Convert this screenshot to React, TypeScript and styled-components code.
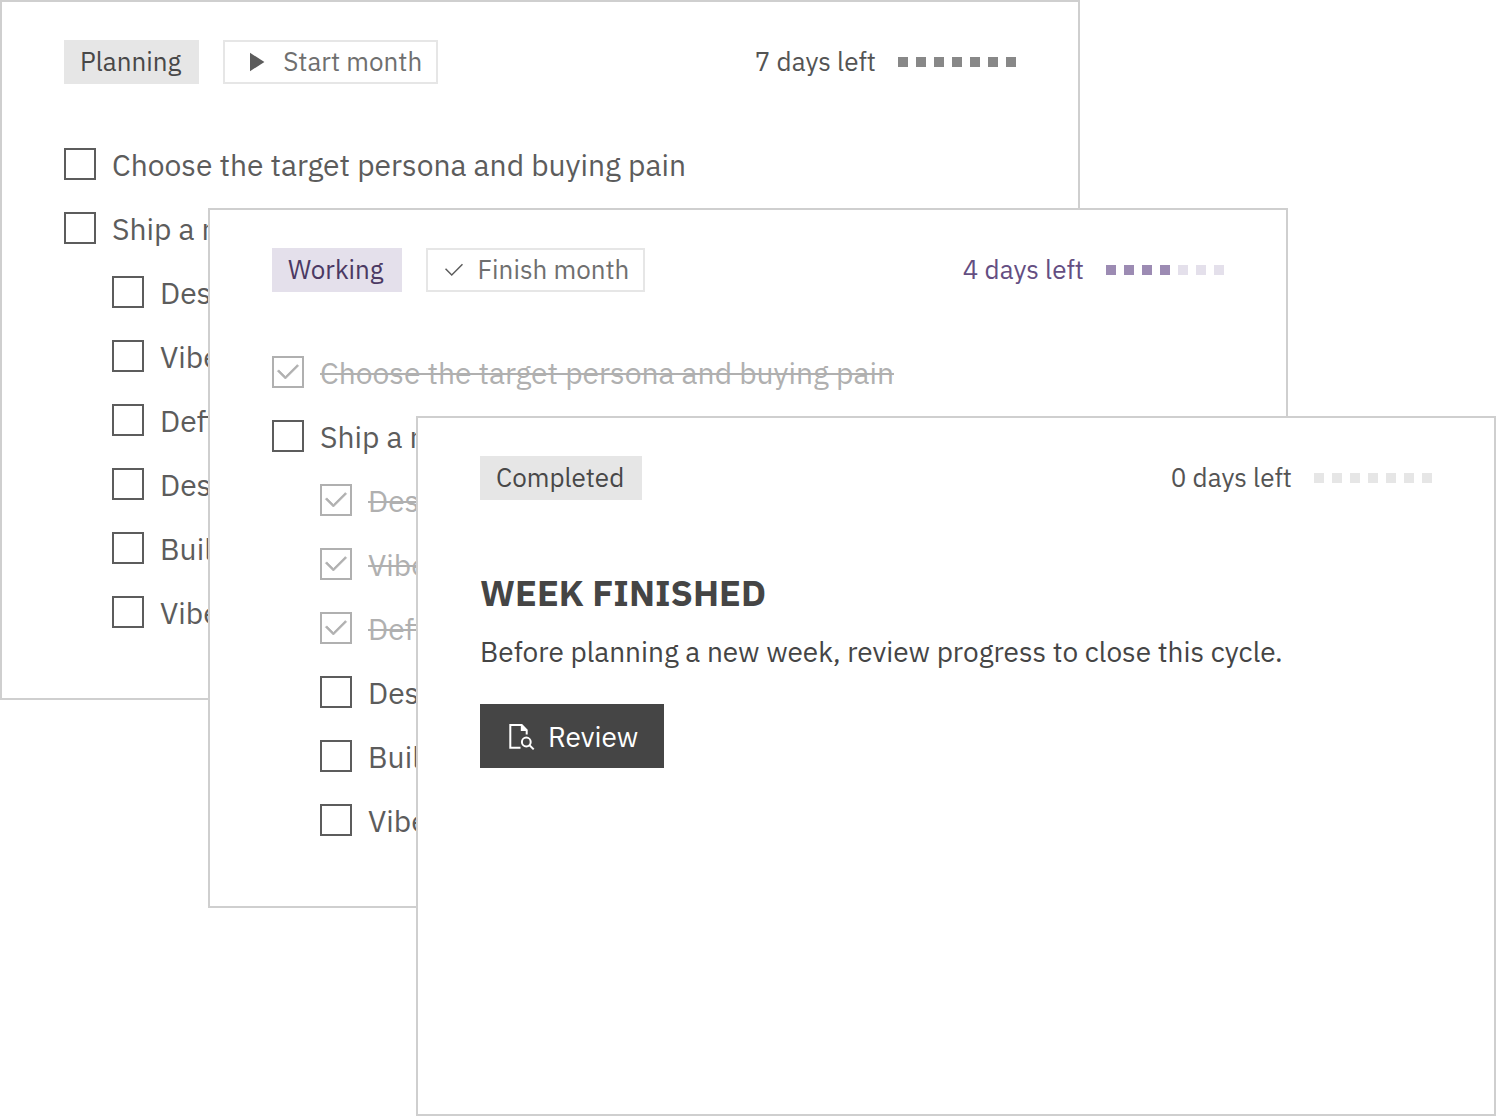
import React, { useId } from 'react';
import styled, { createGlobalStyle } from 'styled-components';

const GlobalStyle = createGlobalStyle`
  *, *::before, *::after { box-sizing: border-box; }
  body {
    margin: 0;
    background: #ffffff;
    color: #5c5c5c;
    font-family: 'IBM Plex Sans', 'Noto Sans', sans-serif;
    font-size: 26px;
    line-height: 34px;
  }
  button { font: inherit; cursor: pointer; }
`;

type Tone = 'neutral' | 'accent';

const textWeight = `'IBM Plex Sans Text', 'IBM Plex Sans', 'Noto Sans', sans-serif`;

const Stack = styled.main`
  display: grid;
  grid-template-columns: 208px 208px minmax(0, 1fr) 208px 208px;
  grid-template-rows: 208px 208px auto 208px 208px;
`;

const Card = styled.section<{ $step: number }>`
  grid-column: ${({ $step }) => `${$step} / span 3`};
  grid-row: ${({ $step }) => `${$step} / span 3`};
  min-height: 700px;
  padding: 38px 62px;
  background: #ffffff;
  border: 2px solid #cfcfcf;
`;

const Header = styled.header`
  display: flex;
  align-items: center;
  gap: 24px;
  height: 44px;
  margin-bottom: 64px;
`;

const HeaderText = styled.span`
  padding-bottom: 2px;
`;

const Badge = styled.span<{ $tone: Tone }>`
  padding: 4px 18px 6px 16px;
  font-family: ${textWeight};
  color: ${({ $tone }) => ($tone === 'accent' ? '#4b3963' : '#484848')};
  background: ${({ $tone }) => ($tone === 'accent' ? '#e4e0eb' : '#e6e6e6')};
`;

const OutlineButton = styled.button`
  display: flex;
  align-items: center;
  gap: 12px;
  height: 44px;
  padding: 0 14px;
  color: #6f6f6f;
  background: #ffffff;
  border: 2px solid #e6e6e6;
`;

const Remaining = styled.div<{ $tone: Tone }>`
  display: flex;
  align-items: center;
  gap: 22px;
  margin-left: auto;
  font-family: ${textWeight};
  white-space: nowrap;
  color: ${({ $tone }) => ($tone === 'accent' ? '#644e82' : '#545454')};
`;

const Dots = styled.div`
  display: flex;
  gap: 8px;
`;

const Dot = styled.span<{ $tone: Tone; $on: boolean }>`
  width: 10px;
  height: 10px;
  background: ${({ $tone, $on }) =>
    $tone === 'accent' ? ($on ? '#9c8bb3' : '#e4e0eb') : $on ? '#888888' : '#e6e6e6'};
`;

const TaskList = styled.ul`
  display: grid;
  gap: 32px;
  margin: 0;
  padding: 0;
  list-style: none;
`;

const TaskRow = styled.li<{ $nested?: boolean }>`
  display: flex;
  align-items: center;
  gap: 16px;
  height: 32px;
  padding-left: ${({ $nested }) => ($nested ? 48 : 0)}px;
`;

const CheckCell = styled.span`
  display: grid;
  flex: none;
  width: 32px;
  height: 32px;

  > * { grid-area: 1 / 1; }
  > svg { place-self: center; pointer-events: none; }
`;

const Check = styled.input`
  appearance: none;
  width: 32px;
  height: 32px;
  margin: 0;
  border: 2px solid #5c5c5c;
  background: #ffffff;
  &:checked { border-color: #b0b0b0; }
`;

const TaskLabel = styled.label<{ $done?: boolean }>`
  padding-top: 2px;
  font-size: 30px;
  line-height: 40px;
  white-space: nowrap;
  color: ${({ $done }) => ($done ? '#b0b0b0' : '#5c5c5c')};
  text-decoration: ${({ $done }) => ($done ? 'line-through' : 'none')};
  text-decoration-thickness: 2px;
`;

const Title = styled.h2`
  margin: 0 0 16px;
  font-size: 36px;
  line-height: 50px;
  font-weight: 700;
  color: #454545;
`;

const Message = styled.p`
  margin: 0 0 34px;
  font-size: 28px;
  line-height: 36px;
  color: #454545;
`;

const Summary = styled.div`
  display: flex;
  flex-direction: column;
  align-items: flex-start;
  padding-top: 4px;
`;

const PrimaryButton = styled.button`
  display: flex;
  align-items: center;
  gap: 12px;
  height: 64px;
  padding: 2px 26px 0;
  font-size: 28px;
  color: #ffffff;
  background: #454545;
  border: 0;
`;

const PlayIcon = () => (
  <svg width="32" height="32" viewBox="0 0 32 32" fill="#5c5c5c" aria-hidden="true">
    <path d="M11 6.8v18.4L25.4 16z" />
  </svg>
);

const CheckIcon = ({ size, color, weight = 0 }: { size: number; color: string; weight?: number }) => (
  <svg width={size} height={size} viewBox="0 0 32 32" fill={color} stroke={color} strokeWidth={weight} aria-hidden="true">
    <path d="M13 24 4 15l1.414-1.414L13 21.171 26.586 7.586 28 9z" />
  </svg>
);

const DocumentSearchIcon = () => (
  <svg width="30" height="30" viewBox="0 0 30 30" fill="none" stroke="#ffffff" strokeWidth="2" aria-hidden="true">
    <path d="M14.5 25.8H4.3V3h11.4l5 5.2V12.6" />
    <path d="M14.8 2.4v6.5h6.6z" fill="#ffffff" stroke="none" />
    <circle cx="20.3" cy="20" r="4.4" />
    <path d="m23.3 23 4.4 4.4" />
  </svg>
);

interface Task {
  text: string;
  done?: boolean;
  nested?: boolean;
}

const tasks = (doneIndexes: number[]): Task[] =>
  ['Choose the target persona and buying pain', 'Ship a n', 'Des', 'Vibe', 'Defi', 'Des', 'Buil', 'Vibe'].map(
    (text, i) => ({ text, nested: i > 1, done: doneIndexes.includes(i) }),
  );

function TaskItem({ task }: { task: Task }) {
  const id = useId();
  return (
    <TaskRow $nested={task.nested}>
      <CheckCell>
        <Check id={id} type="checkbox" defaultChecked={task.done} />
        {task.done && <CheckIcon size={28} color="#b0b0b0" weight={1} />}
      </CheckCell>
      <TaskLabel htmlFor={id} $done={task.done}>{task.text}</TaskLabel>
    </TaskRow>
  );
}

function DaysLeft({ days, tone }: { days: number; tone: Tone }) {
  return (
    <Remaining $tone={tone}>
      <HeaderText>{days} days left</HeaderText>
      <Dots>
        {Array.from({ length: 7 }, (_, i) => (
          <Dot key={i} $tone={tone} $on={i < days} />
        ))}
      </Dots>
    </Remaining>
  );
}

export default function App() {
  return (
    <>
      <GlobalStyle />
      <Stack>
        <Card $step={1}>
          <Header>
            <Badge $tone="neutral">Planning</Badge>
            <OutlineButton type="button"><PlayIcon /><HeaderText>Start month</HeaderText></OutlineButton>
            <DaysLeft days={7} tone="neutral" />
          </Header>
          <TaskList>
            {tasks([]).map((task, i) => <TaskItem key={i} task={task} />)}
          </TaskList>
        </Card>
        <Card $step={2}>
          <Header>
            <Badge $tone="accent">Working</Badge>
            <OutlineButton type="button"><CheckIcon size={24} color="#5c5c5c" /><HeaderText>Finish month</HeaderText></OutlineButton>
            <DaysLeft days={4} tone="accent" />
          </Header>
          <TaskList>
            {tasks([0, 2, 3, 4]).map((task, i) => <TaskItem key={i} task={task} />)}
          </TaskList>
        </Card>
        <Card $step={3}>
          <Header>
            <Badge $tone="neutral">Completed</Badge>
            <DaysLeft days={0} tone="neutral" />
          </Header>
          <Summary>
            <Title>WEEK FINISHED</Title>
            <Message>Before planning a new week, review progress to close this cycle.</Message>
            <PrimaryButton type="button"><DocumentSearchIcon />Review</PrimaryButton>
          </Summary>
        </Card>
      </Stack>
    </>
  );
}
